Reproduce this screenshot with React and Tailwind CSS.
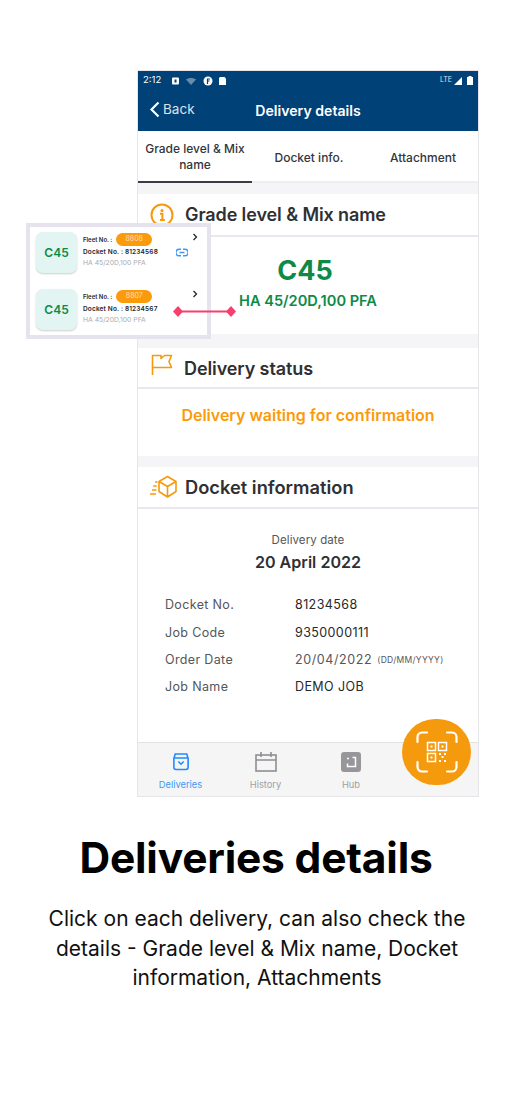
import React from "react";

const font = { fontFamily: "Inter, 'Noto Sans', sans-serif" };

function Info() {
  return (
    <svg width="24" height="24" viewBox="0 0 24 24" fill="none" stroke="#f59a0c">
      <circle cx="12" cy="12" r="10.5" strokeWidth="2" />
      <circle cx="12" cy="7.4" r="1.5" fill="#f59a0c" stroke="none" />
      <path d="M10 10.800h2.400v6M10 17h4.800" strokeWidth="2" />
    </svg>
  );
}
function Flag() {
  return (
    <svg width="22" height="22" viewBox="0 0 22 22" fill="none" stroke="#f59a0c" strokeWidth="1.6">
      <path d="M1.500 21V1.500h8.500v3l3.500-3h7l-2.500 6 2.500 6H1.500" strokeLinejoin="round" />
    </svg>
  );
}
function Box() {
  return (
    <svg width="28" height="24" viewBox="0 0 28 24" fill="none" stroke="#f59a0c" strokeWidth="1.6">
      <path d="M17.500 1.500l8.500 5v10l-8.500 5.500-8.500-5.500v-10zM9 6.500l8.500 5 8.500-5M17.500 11.500V22" strokeLinejoin="round" />
      <path d="M5 7h2.500M3.200 11h3.500M2 15h4.500M0 19h6" strokeWidth="1.300" />
    </svg>
  );
}
function SectionHead({ icon, title, h, iconClass, textClass }) {
  return (
    <div className={`flex items-center bg-white border-b-2 border-[#e8e8ee] pl-[13px] ${h}`}>
      <div className={`w-[34px] shrink-0 ${iconClass || ""}`}>{icon}</div>
      <span className={`font-semibold text-[#2f3033] ${textClass || "text-[18px] tracking-[-0.1px]"}`}>{title}</span>
    </div>
  );
}
function Row({ label, value, valueClass, extra, h }) {
  return (
    <div className={`flex items-center ${h}`}>
      <div className="w-[130px] text-[12.5px] tracking-[0.35px] text-[#55565a]">{label}</div>
      <div className={`text-[12.5px] ${valueClass || "text-[#26272a] tracking-[0.4px]"}`}>{value}</div>
      {extra}
    </div>
  );
}
function DeliveryCard({ fleet, docket, children }) {
  return (
    <div className="relative flex h-[42px]">
      <div className="w-[41px] h-[41px] rounded-[7px] bg-[#e2f5f3] shadow-[0_1px_2px_rgba(0,0,0,0.2)] flex items-center justify-center text-[12px] font-semibold text-[#0e8a46] shrink-0">C45</div>
      <div className="ml-[6px] pt-[1px]">
        <div className="flex items-center h-[13px] text-[6px] font-semibold text-[#26272a]">
          Fleet No. :
          <span className="ml-[4px] w-[36px] h-[13px] rounded-full bg-[#fb9a0a] text-white/70 text-[7px] font-normal flex items-center justify-center">{fleet}</span>
        </div>
        <div className="text-[6.5px] font-semibold text-[#26272a] mt-[2px] leading-[9px] tracking-[0.15px]">Docket No. : {docket}</div>
        <div className="text-[6.800px] text-[#a9abaf] mt-[1px] leading-[10px]">HA 45/20D,100 PFA</div>
      </div>
      <svg className="absolute right-[9px] top-[1px]" width="6" height="8" viewBox="0 0 6 8" fill="none" stroke="#26272a" strokeWidth="1.300"><path d="M1.500 1l3 3-3 3" /></svg>
      {children}
    </div>
  );
}

export default function App() {
  return (
    <div style={font} className="relative w-[512px] h-[1108px] bg-white overflow-hidden">
      <div className="pt-[70px] pl-[137px]">
        <div className="relative w-[342px] h-[727px] border border-[#e6e6ea] flex flex-col bg-[#f5f5f7]">
          <div className="bg-[#004178] text-white h-[60px] shrink-0">
            <div className="flex items-center h-[19px] px-[5px] justify-between">
              <div className="flex items-center gap-[9px] text-[9.500px]">
                <span className="w-[20px]">2:12</span>
                <svg width="56" height="10" viewBox="0 0 56 10" fill="white">
                  <rect x="0" y="1.500" width="7" height="7" rx="1" />
                  <rect x="2.500" y="3.500" width="2" height="3" fill="#004178" />
                  <path d="M14 3.500c3-2 7-2 10 0l-5 5.500z" opacity="0.4" />
                  <circle cx="36" cy="5" r="4.500" />
                  <path d="M35.500 8V3h2.500M35.500 5h2" stroke="#004178" strokeWidth="1.200" fill="none" />
                  <path d="M48 1h4.500l1.500 1.500V9h-7V2z" />
                </svg>
              </div>
              <div className="flex items-center gap-[2px] text-[7px] text-white/85">
                <span>LTE</span>
                <svg width="9" height="8" viewBox="0 0 9 8" fill="white"><path d="M0 8L8 0v8z" /></svg>
                <svg className="ml-[2px]" width="6" height="9" viewBox="0 0 6 9" fill="white"><path d="M1.500 0h3v1H6v8H0V1h1.500z" /></svg>
              </div>
            </div>
            <div className="relative flex items-center justify-center h-[41px]">
              <div className="absolute left-[11px] flex items-center gap-[3px] top-[9px]">
                <svg width="11" height="17" viewBox="0 0 11 17" fill="none" stroke="white" strokeWidth="2.200"><path d="M9.500 1.500L2.500 8.500l7 7" /></svg>
                <span className="text-[13.500px] text-white/85">Back</span>
              </div>
              <span className="text-[14.100px] font-semibold">Delivery details</span>
            </div>
          </div>
          <div className="flex h-[52px] bg-white shrink-0 text-[12px] font-medium text-[#34353a] leading-[16px]">
            <div className="w-[114px] flex items-center justify-center text-center border-b-2 border-[#3c3d44] px-[4px] pt-[2px]">Grade level &amp; Mix name</div>
            <div className="w-[114px] flex items-center justify-center border-b-2 border-[#eeeef0] pt-[4px]">Docket info.</div>
            <div className="flex-1 flex items-center justify-center border-b-2 border-[#eeeef0] pt-[4px] pl-[2px]">Attachment</div>
          </div>
          <div className="h-[11px] shrink-0" />
          <SectionHead icon={<Info />} iconClass="-ml-[1px] mr-[1px]" title="Grade level & Mix name" h="h-[43px]" />
          <div className="bg-white h-[97px] shrink-0 flex flex-col items-center pt-[20px]">
            <div className="text-[27px] font-bold text-[#0e8a46] leading-[28px] pr-[6px]">C45</div>
            <div className="text-[14.600px] font-semibold text-[#0e8a46] mt-[8px] leading-[17px]">HA 45/20D,100 PFA</div>
          </div>
          <div className="h-[14px] shrink-0" />
          <SectionHead icon={<Flag />} iconClass="-mt-[6px]" textClass="text-[18px] tracking-[-0.1px] pt-[2px] -ml-[1px]" title="Delivery status" h="h-[41px]" />
          <div className="bg-white h-[67px] shrink-0 flex justify-center pt-[16px]">
            <span className="text-[16px] font-semibold text-[#fb9a0a] leading-[20px]">Delivery waiting for confirmation</span>
          </div>
          <div className="h-[11px] shrink-0" />
          <SectionHead icon={<Box />} iconClass="-ml-[1px]" textClass="text-[18.300px] pl-[1px] pt-[2px]" title="Docket information" h="h-[42px]" />
          <div className="bg-white flex-1 pt-[23px]">
            <div className="text-center text-[11.500px] text-[#55565a] tracking-[0.1px] leading-[16px]">Delivery date</div>
            <div className="text-center text-[16.100px] font-semibold text-[#2f3033] leading-[20px] mt-[4px]">20 April 2022</div>
            <div className="pl-[27px] mt-[20px]">
              <Row label="Docket No." value="81234568" h="h-[27px]" />
              <Row label="Job Code" value="9350000111" h="h-[28px]" />
              <Row label="Order Date" value="20/04/2022" h="h-[27px]" valueClass="text-[#55565a] tracking-[0.6px]"
                extra={<span className="ml-[5px] text-[8.500px] text-[#55565a] tracking-[0.3px]">(DD/MM/YYYY)</span>} />
              <Row label="Job Name" value="DEMO JOB" h="h-[27px]" />
            </div>
          </div>
          <div className="h-[54px] shrink-0 bg-[#f5f5f5] border-t border-[#e3e3e6] flex text-[9.300px]">
            <div className="w-[85px] flex flex-col items-center pt-[10px] text-[#3f97f5]">
              <svg width="16" height="18" viewBox="0 0 18 20" fill="none" stroke="#1f8bff" strokeWidth="1.800">
                <path d="M2.500 1h13l1.500 5v10a2.500 2.500 0 0 1-2.500 2.500h-11A2.500 2.500 0 0 1 1 16V6zM1 5.500h16" />
                <path d="M6 9.500l3 3 3-3" />
              </svg>
              <span className="mt-[7px]">Deliveries</span>
            </div>
            <div className="w-[85px] flex flex-col items-center pt-[9px] text-[#a0a0a4]">
              <svg width="22" height="20" viewBox="0 0 22 20" fill="none" stroke="#8f8f93" strokeWidth="1.600">
                <rect x="1" y="3" width="20" height="16" />
                <path d="M1 8h20M6 0v5M16 0v5" />
              </svg>
              <span className="mt-[6px]">History</span>
            </div>
            <div className="w-[86px] flex flex-col items-center pt-[9px] text-[#a0a0a4]">
              <svg width="20" height="20" viewBox="0 0 20 20">
                <rect width="20" height="20" rx="3" fill="#97979b" />
                <path d="M6 6.500h2M11.500 5.500h3v9h-8v-3" fill="none" stroke="white" strokeWidth="1.500" />
              </svg>
              <span className="mt-[6px]">Hub</span>
            </div>
          </div>
          <div className="absolute left-[264px] top-[648px] w-[69px] h-[66px] rounded-full bg-[#f59a0c] flex items-center justify-center">
            <svg width="42" height="42" viewBox="0 0 42 42" fill="none" stroke="white">
              <path d="M1.500 11V6a4.500 4.500 0 0 1 4.500-4.500h5M31 1.500h5A4.500 4.500 0 0 1 40.500 6v5M40.500 31v5a4.500 4.500 0 0 1-4.500 4.500h-5M11 40.500H6A4.500 4.500 0 0 1 1.500 36v-5" strokeWidth="2.200" strokeLinecap="round" />
              <rect x="11.500" y="11.500" width="8" height="8" strokeWidth="1.500" />
              <rect x="22.500" y="11.500" width="8" height="8" strokeWidth="1.500" />
              <rect x="11.500" y="22.500" width="8" height="8" strokeWidth="1.500" />
              <rect x="14.500" y="14.500" width="2" height="2" fill="white" stroke="none" />
              <rect x="25.500" y="14.500" width="2" height="2" fill="white" stroke="none" />
              <rect x="14.500" y="25.500" width="2" height="2" fill="white" stroke="none" />
              <path d="M23 23h2M28 23h2M25.500 26h2M23 30h2M28 30h2" strokeWidth="1.800" />
            </svg>
          </div>
        </div>
      </div>

      <div className="absolute left-[26px] top-[223px] w-[185px] h-[116px] bg-white border-4 border-[#e6e3ee] pl-[6px] pt-[5px] flex flex-col gap-[15px]">
        <DeliveryCard fleet="8808" docket="81234568">
          <svg className="absolute left-[140px] top-[16px]" width="12" height="9" viewBox="0 0 12 9" fill="none" stroke="#3f97f5" strokeWidth="1.500">
            <path d="M5 1.200H3.200a3.300 3.300 0 0 0 0 6.600H5M7 1.200h1.800a3.300 3.300 0 0 1 0 6.600H7M3.500 4.500h5" />
          </svg>
        </DeliveryCard>
        <DeliveryCard fleet="8807" docket="81234567" />
      </div>
      <svg className="absolute left-[172px] top-[305px]" width="66" height="13" viewBox="0 0 66 13" fill="#f73f6e">
        <path d="M6 1l5 5.500-5 5.500-5-5.500zM59 1l5 5.500-5 5.500-5-5.500z" />
        <rect x="6" y="5.500" width="53" height="2" />
      </svg>

      <div className="absolute left-0 right-0 top-[834px] text-center text-[42.500px] font-bold text-black leading-[48px] tracking-[-0.2px]">Deliveries details</div>
      <div className="absolute left-[38px] w-[438px] top-[904px] text-center text-[21px] text-[#111] leading-[29.500px]">
        Click on each delivery, can also check the details - Grade level &amp; Mix name, Docket information, Attachments
      </div>
    </div>
  );
}
